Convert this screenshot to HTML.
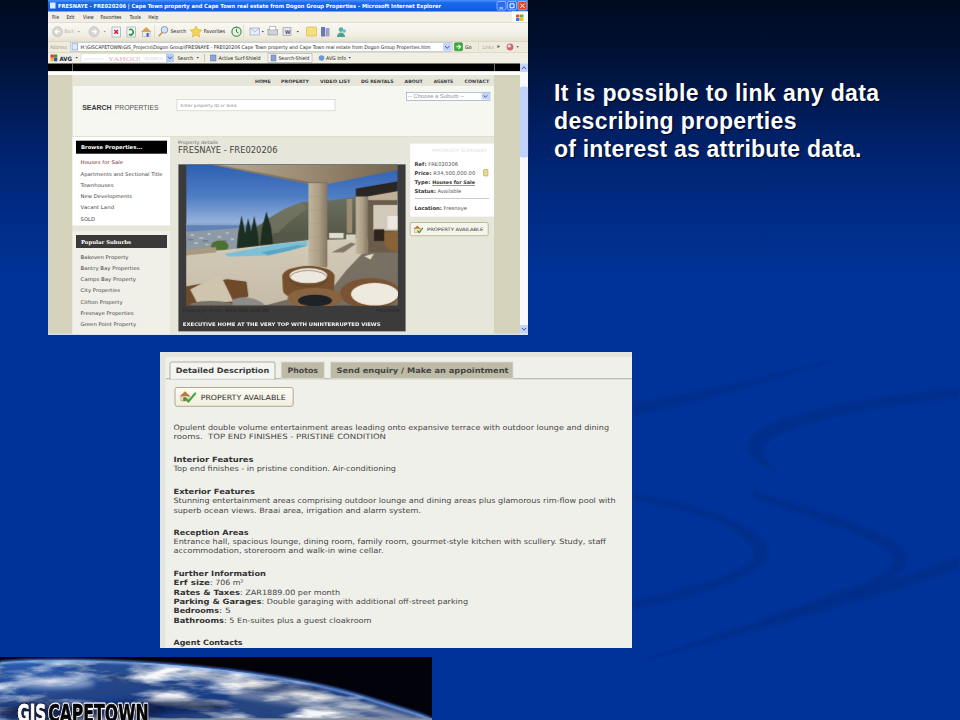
<!DOCTYPE html>
<html><head><meta charset="utf-8">
<title>GIS Cape Town</title>
<style>
*{box-sizing:border-box;margin:0;padding:0}
html,body{width:960px;height:720px;overflow:hidden}
body{position:relative;background:#003399;font-family:"Liberation Sans",sans-serif}
#bg{position:absolute;left:0;top:0;width:960px;height:720px;background:linear-gradient(to bottom,#000a1e 0px,#001238 60px,#001f63 130px,#002a82 200px,#003399 280px,#003399 720px)}
#title{position:absolute;left:554px;top:79.2px;color:#fff;font-weight:bold;font-size:23px;line-height:28.1px;text-shadow:1px 1px 1px rgba(0,0,20,.8);white-space:nowrap}
svg{position:absolute;left:0;top:0;font-family:"DejaVu Sans","Liberation Sans",sans-serif}
</style></head><body>
<div id="bg"></div>

<svg id="sw" width="960" height="720" viewBox="0 0 960 720">
<defs><filter id="swb" x="-5%" y="-5%" width="110%" height="110%"><feGaussianBlur stdDeviation="1.3"/></filter></defs>
<g fill="#00226e" fill-opacity=".26" filter="url(#swb)">
<path d="M632 403 C 700 392 775 376 838 358 C 775 381 700 402 632 416z"/>
<path d="M632 493 C 690 502 752 520 768 546 C 780 572 700 598 632 609 L632 601 C 690 588 765 570 752 548 C 738 524 690 510 632 500z"/>
<path d="M960 388 C 880 395 795 410 762 428 C 738 444 745 462 778 472 C 760 458 758 446 775 437 C 810 419 880 405 960 398z"/>
<path d="M752 490 C 800 505 885 528 905 550 C 918 574 875 588 838 600 C 770 621 700 642 636 664 C 700 640 770 616 830 594 C 868 582 900 572 892 556 C 876 536 800 515 752 498z"/>
<path d="M960 556 C 880 586 760 624 636 662 C 760 630 880 598 960 568z"/>
</g></svg>
<div id="title"><span style="letter-spacing:.4px">It is possible to link any data</span><br><span style="letter-spacing:.37px">describing properties</span><br><span style="letter-spacing:.2px">of interest as attribute data.</span></div>
<svg id="ie" width="960" height="720" viewBox="0 0 960 720">
<defs><linearGradient id="tbg" x1="0" y1="0" x2="0" y2="1"><stop offset="0" stop-color="#4a92fa"/><stop offset=".25" stop-color="#1a68ee"/><stop offset="1" stop-color="#0f5ae0"/></linearGradient></defs>
<rect x="48" y="0" width="480" height="335" fill="#ece9d8" />
<rect x="48" y="11.5" width="480" height="10.5" fill="#f1efe5" />
<linearGradient id="tlg" x1="0" y1="0" x2="0" y2="1"><stop offset="0" stop-color="#f9f8f3"/><stop offset=".7" stop-color="#f1efe4"/><stop offset="1" stop-color="#e6e2d2"/></linearGradient>
<rect x="48" y="22" width="480" height="19" fill="url(#tlg)" />
<rect x="48" y="41" width="480" height="11" fill="#eeebdd" />
<rect x="48" y="52" width="480" height="11.5" fill="#f1efe4" />
<rect x="48" y="0" width="480" height="11.5" fill="url(#tbg)" />
<rect x="50" y="2.5" width="5.5" height="6" fill="#dfe9fb" />
<text x="58" y="8" font-size="5.6" fill="#fff" textLength="383" lengthAdjust="spacingAndGlyphs" font-weight="bold">FRESNAYE - FRE020206 | Cape Town property and Cape Town real estate from Dogon Group Properties - Microsoft Internet Explorer</text>
<rect x="497" y="1.5" width="9" height="8.5" fill="#2a6cf0" rx="1.5" stroke="#cfe0ff" stroke-width=".6"/>
<rect x="507.5" y="1.5" width="9" height="8.5" fill="#2a6cf0" rx="1.5" stroke="#cfe0ff" stroke-width=".6"/>
<rect x="518" y="1.5" width="9" height="8.5" fill="#d8482a" rx="1.5" stroke="#f5d0c8" stroke-width=".6"/>
<path d="M499.5 8h3.5M510 3.8h4v4h-4zM520.3 3.6l4.4 4.4m0-4.4l-4.4 4.4" stroke="#fff" stroke-width="1" fill="none"/>
<text x="52" y="18.7" font-size="5.4" fill="#222" textLength="7" lengthAdjust="spacingAndGlyphs">File</text>
<text x="66.5" y="18.7" font-size="5.4" fill="#222" textLength="8" lengthAdjust="spacingAndGlyphs">Edit</text>
<text x="83" y="18.7" font-size="5.4" fill="#222" textLength="10.5" lengthAdjust="spacingAndGlyphs">View</text>
<text x="100.5" y="18.7" font-size="5.4" fill="#222" textLength="21" lengthAdjust="spacingAndGlyphs">Favorites</text>
<text x="129.5" y="18.7" font-size="5.4" fill="#222" textLength="11.5" lengthAdjust="spacingAndGlyphs">Tools</text>
<text x="148.3" y="18.7" font-size="5.4" fill="#222" textLength="10" lengthAdjust="spacingAndGlyphs">Help</text>
<rect x="512" y="11.5" width="16" height="10.5" fill="#fff" />
<path d="M516 14.5h3.5v3h-3.5z" fill="#e8502a"/><path d="M520 14.5h3.5v3h-3.5z" fill="#6bb52a"/><path d="M516 18h3.5v3h-3.5z" fill="#3a7be0"/><path d="M520 18h3.5v3h-3.5z" fill="#f0c020"/>
<rect x="48" y="22" width="480" height="0.6" fill="#d0ccb8" />
<circle cx="57.5" cy="31.7" r="5" fill="#d6d6d2" stroke="#b8b8b4" stroke-width=".6"/><path d="M59.8 31.7h-4.4m2-2.2l-2.2 2.2 2.2 2.2" stroke="#fff" stroke-width="1.2" fill="none"/>
<text x="64.5" y="33.4" font-size="5" fill="#b4b2a6" textLength="9.5" lengthAdjust="spacingAndGlyphs">Back</text>
<path d="M77.5 31l1.2 1.4 1.2-1.4z" fill="#999"/>
<circle cx="94" cy="31.7" r="5" fill="#d6d6d2" stroke="#b8b8b4" stroke-width=".6"/><path d="M91.8 31.7h4.4m-2-2.2l2.2 2.2-2.2 2.2" stroke="#fff" stroke-width="1.2" fill="none"/>
<path d="M103.5 31l1.2 1.4 1.2-1.4z" fill="#999"/>
<rect x="112" y="27" width="8.5" height="10" fill="#f4f4f8" stroke="#8a9ac0" stroke-width=".6"/>
<path d="M114.3 30l3.8 3.8m0-3.8l-3.8 3.8" stroke="#d02020" stroke-width="1.4"/>
<rect x="127" y="27" width="8.5" height="10" fill="#f4f8f4" stroke="#8a9ac0" stroke-width=".6"/>
<path d="M129 30a2.6 2.6 0 1 1 0 4" stroke="#2a9a3a" stroke-width="1.5" fill="none"/><path d="M129 34.5a2.6 2.6 0 0 0 4-1" stroke="#2a9a3a" stroke-width="1.5" fill="none"/>
<path d="M141 32l5.2-5 5.2 5z" fill="#d8a040"/><rect x="142.3" y="31.5" width="7.8" height="5.2" fill="#f0ece0" stroke="#9098b0" stroke-width=".5"/><rect x="146.5" y="33" width="2.2" height="3.7" fill="#3a68c8"/>
<rect x="154.5" y="25" width="0.5" height="13.5" fill="#cfcbb8" />
<circle cx="164.5" cy="29.8" r="3.3" fill="#cfe4fa" stroke="#7a92b8" stroke-width=".9"/><path d="M162.3 32.3l-3.6 4" stroke="#c09a50" stroke-width="1.6"/>
<text x="170.5" y="33.4" font-size="5.2" fill="#222" textLength="15.5" lengthAdjust="spacingAndGlyphs">Search</text>
<path d="M196 26l1.8 3.6 4 .5-2.9 2.8.7 4-3.6-1.9-3.6 1.9.7-4-2.9-2.8 4-.5z" fill="#f6d64a" stroke="#c8a020" stroke-width=".5"/>
<text x="203.7" y="33.4" font-size="5.2" fill="#222" textLength="21.5" lengthAdjust="spacingAndGlyphs">Favorites</text>
<circle cx="236.5" cy="31.7" r="4.6" fill="#e4f0e0" stroke="#3a8a4a" stroke-width="1.1"/><path d="M236.5 28.8v3l2 1.2" stroke="#2a6a3a" stroke-width=".9" fill="none"/>
<rect x="243.5" y="25" width="0.5" height="13.5" fill="#cfcbb8" />
<rect x="250" y="28" width="9.5" height="7" fill="#e8eef8" stroke="#8a9cc0" stroke-width=".6"/>
<path d="M250 28l4.75 3.8 4.75-3.8" stroke="#8a9cc0" stroke-width=".6" fill="none"/>
<path d="M261.5 31l1.2 1.4 1.2-1.4z" fill="#444"/>
<rect x="268" y="29.5" width="9.5" height="5.5" fill="#d0d2d8" stroke="#888c98" stroke-width=".6"/>
<rect x="269.8" y="26.5" width="6" height="3.5" fill="#fff" stroke="#888c98" stroke-width=".5"/>
<rect x="283" y="27.5" width="8" height="8" fill="#e4e4e8" stroke="#9094a0" stroke-width=".6"/>
<text x="285" y="33.6" font-size="5" fill="#555" font-weight="bold">W</text>
<path d="M296.5 31l1.2 1.4 1.2-1.4z" fill="#444"/>
<rect x="306.5" y="27" width="10" height="9" fill="#f4e07a" stroke="#d0b040" stroke-width=".6" rx="1"/>
<rect x="321" y="27" width="4" height="9.5" fill="#6a7ab8" />
<rect x="325.5" y="28" width="4" height="8.5" fill="#9aa4c8" />
<circle cx="341" cy="29.6" r="2.3" fill="#58b0a0"/><path d="M337 37c0-6 8-6 8 0z" fill="#48a090"/><circle cx="344.3" cy="31" r="1.8" fill="#70c0d0"/>
<rect x="48" y="41" width="480" height="0.6" fill="#d0ccb8" />
<text x="50" y="48.6" font-size="5" fill="#9a988a" textLength="17" lengthAdjust="spacingAndGlyphs">Address</text>
<rect x="70.3" y="42.3" width="381.7" height="9.2" fill="#fff" stroke="#a4b8d0" stroke-width=".6"/>
<rect x="72" y="43.8" width="5.8" height="6.2" fill="#dfe8f8" stroke="#5a7ac0" stroke-width=".5"/>
<text x="80.5" y="48.8" font-size="5" fill="#222" textLength="350" lengthAdjust="spacingAndGlyphs">H:\GISCAPETOWN\GIS_Projects\Dogon Group\FRESNAYE - FRE020206  Cape Town property and Cape Town real estate from Dogon Group Properties.htm</text>
<rect x="443" y="43" width="8.5" height="7.8" fill="#c4d4f8" rx="1"/>
<path d="M445 46l2.2 2.4 2.2-2.4" stroke="#3a5aa0" stroke-width="1" fill="none"/>
<rect x="454.5" y="42.8" width="8" height="8" fill="#3cae3c" rx="1" stroke="#2a7a2a" stroke-width=".5"/>
<path d="M456.3 46.8h4m-1.8-2l2 2-2 2" stroke="#fff" stroke-width="1.1" fill="none"/>
<text x="465" y="48.8" font-size="5.2" fill="#222" textLength="6.5" lengthAdjust="spacingAndGlyphs">Go</text>
<rect x="478.5" y="42.5" width="0.5" height="9" fill="#cfcbb8" />
<text x="482.5" y="48.8" font-size="5" fill="#a8a698" textLength="11.5" lengthAdjust="spacingAndGlyphs">Links</text>
<text x="496.5" y="48.3" font-size="5.5" fill="#222" font-weight="bold">»</text>
<circle cx="510" cy="47" r="3.4" fill="#c86a70"/><circle cx="509.2" cy="46" r="1.6" fill="#f0e0e0"/><path d="M516.5 46.3l1.2 1.4 1.2-1.4z" fill="#444"/>
<rect x="48" y="52" width="480" height="0.6" fill="#d0ccb8" />
<path d="M50.5 54.5h3.3v3.3h-3.3z" fill="#e03a2a"/><path d="M54 54.5h3.3v3.3h-3.3z" fill="#3a9a3a"/><path d="M50.5 58h3.3v3.3h-3.3z" fill="#f0b020"/><path d="M54 58h3.3v3.3h-3.3z" fill="#2a5ac0"/>
<text x="59.5" y="60.5" font-size="6" fill="#1a2a4a" textLength="12.5" lengthAdjust="spacingAndGlyphs" font-weight="bold">AVG</text>
<path d="M75.5 57l1.2 1.4 1.2-1.4z" fill="#333"/>
<rect x="81" y="53.6" width="86" height="8.6" fill="#fff" stroke="#c4c8d8" stroke-width=".5"/>
<text x="108" y="60.5" font-size="6.6" fill="#eab0be" textLength="33" lengthAdjust="spacingAndGlyphs" style="font-family:'Liberation Serif',serif">YAHOO!</text>
<text x="144" y="60" font-size="4.2" fill="#d4d4de" textLength="19" lengthAdjust="spacingAndGlyphs">SEARCH</text>
<text x="84" y="60" font-size="3.6" fill="#e4e4ec" textLength="20" lengthAdjust="spacingAndGlyphs">powered by</text>
<rect x="166" y="53.6" width="8" height="8.6" fill="#b8ccf4" rx="1"/>
<path d="M168 56.6l2 2.2 2-2.2" stroke="#3a5aa0" stroke-width="1" fill="none"/>
<text x="177.5" y="60.3" font-size="5.2" fill="#222" textLength="15.5" lengthAdjust="spacingAndGlyphs">Search</text>
<path d="M196.5 57l1.2 1.4 1.2-1.4z" fill="#333"/>
<rect x="204" y="54" width="0.5" height="8" fill="#9a988a" />
<rect x="210.5" y="55" width="5.5" height="6" fill="#8aa4d8" stroke="#5a70a8" stroke-width=".5"/>
<text x="218.5" y="60.3" font-size="5.2" fill="#222" textLength="42" lengthAdjust="spacingAndGlyphs">Active  Surf-Shield</text>
<rect x="268" y="53.5" width="44" height="9" fill="#f8f8f4" stroke="#a8a8a0" stroke-width=".6"/>
<rect x="271" y="55" width="5" height="6" fill="#8aa4d8" stroke="#5a70a8" stroke-width=".5"/>
<text x="278.5" y="60.3" font-size="5.2" fill="#222" textLength="31" lengthAdjust="spacingAndGlyphs">Search-Shield</text>
<circle cx="321.5" cy="58" r="2.8" fill="#6a9ad8"/>
<text x="326" y="60.3" font-size="5.2" fill="#222" textLength="20" lengthAdjust="spacingAndGlyphs">AVG Info</text>
<path d="M348.5 57l1.2 1.4 1.2-1.4z" fill="#333"/>
<rect x="48" y="63.5" width="472" height="7.8" fill="#000" />
<rect x="72.3" y="64" width="0.5" height="7" fill="#ddd" />
<rect x="494" y="64" width="0.5" height="7" fill="#ddd" />
<rect x="48" y="71.3" width="472" height="3.7" fill="#fff" />
<rect x="48" y="75" width="24.5" height="260" fill="#d6d3bd" />
<rect x="494" y="75" width="26" height="260" fill="#d6d3bd" />
<rect x="72.5" y="75" width="421.5" height="11.5" fill="#e6e5da" />
<rect x="72.8" y="86" width="421.2" height="50" fill="#f7f7f2" />
<rect x="72.5" y="136.5" width="421.5" height="198" fill="#e7e6da" />
<path d="M73 136.5H494" stroke="#c8c6b8" stroke-width=".5" stroke-dasharray="1 1"/>
<rect x="520" y="63.5" width="8" height="271.5" fill="#f8f9fe" />
<rect x="520" y="63.5" width="8" height="8.5" fill="#c4d4fa" rx="1"/>
<path d="M522 69l2-2.2 2 2.2" stroke="#3a5aa8" stroke-width="1" fill="none"/>
<rect x="520" y="325" width="8" height="8.5" fill="#c4d4fa" rx="1"/>
<path d="M522 328l2 2.2 2-2.2" stroke="#3a5aa8" stroke-width="1" fill="none"/>
<rect x="520.3" y="87" width="7.4" height="70" fill="#c2d3fa" rx="1.5" stroke="#a8bef0" stroke-width=".5"/>
<rect x="48" y="333.7" width="480" height="1.3" fill="#d8e0f8" />
<text x="255" y="83.3" font-size="4.6" fill="#3a3a3a" textLength="15.7" lengthAdjust="spacingAndGlyphs" font-weight="bold">HOME</text>
<text x="281" y="83.3" font-size="4.6" fill="#3a3a3a" textLength="28" lengthAdjust="spacingAndGlyphs" font-weight="bold">PROPERTY</text>
<text x="320" y="83.3" font-size="4.6" fill="#3a3a3a" textLength="30.4" lengthAdjust="spacingAndGlyphs" font-weight="bold">VIDEO LIST</text>
<text x="361" y="83.3" font-size="4.6" fill="#3a3a3a" textLength="32.6" lengthAdjust="spacingAndGlyphs" font-weight="bold">DG RENTALS</text>
<text x="404.6" y="83.3" font-size="4.6" fill="#3a3a3a" textLength="18.2" lengthAdjust="spacingAndGlyphs" font-weight="bold">ABOUT</text>
<text x="433.8" y="83.3" font-size="4.6" fill="#3a3a3a" textLength="19.4" lengthAdjust="spacingAndGlyphs" font-weight="bold">AGENTS</text>
<text x="464.5" y="83.3" font-size="4.6" fill="#3a3a3a" textLength="24.7" lengthAdjust="spacingAndGlyphs" font-weight="bold">CONTACT</text>
<text x="82.2" y="109.6" font-size="7.2" fill="#3c3c3c" textLength="29.4" lengthAdjust="spacingAndGlyphs" font-weight="bold" style="font-family:'Liberation Sans',sans-serif">SEARCH</text>
<text x="114.7" y="109.6" font-size="7.2" fill="#555" textLength="43.8" lengthAdjust="spacingAndGlyphs" style="font-family:'Liberation Sans',sans-serif">PROPERTIES</text>
<rect x="177" y="99.6" width="158" height="11.2" fill="#fff" stroke="#c8c8c0" stroke-width=".6"/>
<text x="180.5" y="106.7" font-size="4.3" fill="#8a8a8a" textLength="56" lengthAdjust="spacingAndGlyphs">Enter property ID or Area</text>
<rect x="406.3" y="92.3" width="83.6" height="8" fill="#fff" stroke="#7f9db9" stroke-width=".6"/>
<text x="408" y="98.3" font-size="5.2" fill="#94949c" textLength="56" lengthAdjust="spacingAndGlyphs" style="font-family:'Liberation Sans',sans-serif">-- Choose a Suburb --</text>
<rect x="481.5" y="93" width="7.8" height="6.6" fill="#c2d3fa" rx="1"/>
<path d="M483.5 95.3l1.9 2 1.9-2" stroke="#3a5aa8" stroke-width=".9" fill="none"/>
<text x="104" y="118.5" font-size="3.8" fill="#fbfbf8" textLength="22" lengthAdjust="spacingAndGlyphs">Quick Search</text>
<rect x="72.5" y="137" width="97.5" height="88.5" fill="#fff" />
<rect x="76" y="140.7" width="91" height="13" fill="#000" />
<text x="81" y="149.3" font-size="5.2" fill="#fff" textLength="61.5" lengthAdjust="spacingAndGlyphs" font-weight="bold">Browse Properties...</text>
<text x="80.6" y="164.10000000000002" font-size="5" fill="#7a1f33" textLength="42.5" lengthAdjust="spacingAndGlyphs">Houses for Sale</text>
<text x="80.6" y="175.5" font-size="5" fill="#444" textLength="82" lengthAdjust="spacingAndGlyphs">Apartments and Sectional Title</text>
<text x="80.6" y="186.8" font-size="5" fill="#444" textLength="33" lengthAdjust="spacingAndGlyphs">Townhouses</text>
<text x="80.6" y="198.0" font-size="5" fill="#444" textLength="51.5" lengthAdjust="spacingAndGlyphs">New Developments</text>
<text x="80.6" y="209.20000000000002" font-size="5" fill="#444" textLength="33.5" lengthAdjust="spacingAndGlyphs">Vacant Land</text>
<text x="80.6" y="220.5" font-size="5" fill="#444" textLength="14.5" lengthAdjust="spacingAndGlyphs">SOLD</text>
<rect x="72.5" y="231" width="97.5" height="103" fill="#f0efe8" />
<rect x="76" y="235" width="91" height="13" fill="#3b3a38" />
<text x="81" y="243.8" font-size="5.4" fill="#fff" textLength="50" lengthAdjust="spacingAndGlyphs" font-weight="bold" style="font-family:'DejaVu Serif',serif">Popular Suburbs</text>
<text x="80.6" y="258.6" font-size="5" fill="#444" textLength="48" lengthAdjust="spacingAndGlyphs">Bakoven Property</text>
<text x="80.6" y="269.8" font-size="5" fill="#444" textLength="59" lengthAdjust="spacingAndGlyphs">Bantry Bay Properties</text>
<text x="80.6" y="281.1" font-size="5" fill="#444" textLength="55.5" lengthAdjust="spacingAndGlyphs">Camps Bay Property</text>
<text x="80.6" y="292.3" font-size="5" fill="#444" textLength="39.5" lengthAdjust="spacingAndGlyphs">City Properties</text>
<text x="80.6" y="303.6" font-size="5" fill="#444" textLength="42" lengthAdjust="spacingAndGlyphs">Clifton Property</text>
<text x="80.6" y="314.8" font-size="5" fill="#444" textLength="53" lengthAdjust="spacingAndGlyphs">Fresnaye Properties</text>
<text x="80.6" y="326.0" font-size="5" fill="#444" textLength="55.5" lengthAdjust="spacingAndGlyphs">Green Point Property</text>
<text x="178" y="143.6" font-size="4.5" fill="#666" textLength="40" lengthAdjust="spacingAndGlyphs">Property details</text>
<text x="178" y="152.8" font-size="8.3" fill="#444" textLength="99.5" lengthAdjust="spacingAndGlyphs">FRESNAYE - FRE020206</text>
<rect x="410.2" y="143.6" width="83.6" height="73" fill="#fff" />
<text x="432" y="151.6" font-size="4.6" fill="#e0e0e0" textLength="55" lengthAdjust="spacingAndGlyphs">PROPERTY SUMMARY</text>
<text x="414.5" y="166.3" font-size="5.25" fill="#555"><tspan font-weight="bold" fill="#333">Ref:</tspan> FRE020206</text>
<text x="414.5" y="175.3" font-size="5.25" fill="#555"><tspan font-weight="bold" fill="#333">Price:</tspan> R34,500,000.00</text>
<text x="414.5" y="193.20000000000002" font-size="5.25" fill="#555"><tspan font-weight="bold" fill="#333">Status:</tspan> Available</text>
<text x="414.5" y="209.5" font-size="5.25" fill="#555"><tspan font-weight="bold" fill="#333">Location:</tspan> Fresnaye</text>
<text x="414.5" y="184.2" font-size="5.25" fill="#333" font-weight="bold">Type: <tspan text-decoration="underline" font-size="4.85">Houses for Sale</tspan></text>
<rect x="414.5" y="198.5" width="75" height="0.5" fill="#999" />
<rect x="483.5" y="169.5" width="4.5" height="6.5" fill="#e8d890" stroke="#a09060" stroke-width=".5" rx=".7"/>
<rect x="410.2" y="222.5" width="78" height="13.2" fill="#f6f5ea" stroke="#b2ad8c" stroke-width=".8" rx="1.5"/>
<path d="M413.5 229l3.8-3.4 3.8 3.4z" fill="#c87830"/><rect x="414.5" y="228.7" width="5.6" height="3.8" fill="#f0e8d0" stroke="#a08050" stroke-width=".4"/><path d="M417.5 230.5l1.8 2 3.6-4.6" stroke="#3a9a3a" stroke-width="1.2" fill="none"/>
<text x="427" y="231" font-size="4.6" fill="#333" textLength="56.3" lengthAdjust="spacingAndGlyphs">PROPERTY AVAILABLE</text>
</svg><svg id="photo" style="left:176px;top:160px" width="232" height="175" viewBox="0 0 955 720" preserveAspectRatio="none">
<defs>
<linearGradient id="sky" x1="0" y1="0" x2="0" y2="1"><stop offset="0" stop-color="#2e60b2"/><stop offset=".45" stop-color="#4f7dc4"/><stop offset=".8" stop-color="#93b0db"/><stop offset="1" stop-color="#b4c6e0"/></linearGradient>
<linearGradient id="ceil" x1="0" y1="0" x2="1" y2="0"><stop offset="0" stop-color="#b9ab92"/><stop offset=".5" stop-color="#9c8c74"/><stop offset="1" stop-color="#76664f"/></linearGradient>
<linearGradient id="pil" x1="0" y1="0" x2="1" y2="0"><stop offset="0" stop-color="#c2b69e"/><stop offset=".55" stop-color="#ad9f86"/><stop offset="1" stop-color="#847661"/></linearGradient>
<linearGradient id="mtn" x1="0" y1="0" x2="0" y2="1"><stop offset="0" stop-color="#6b7060"/><stop offset="1" stop-color="#4a4c3c"/></linearGradient>
<linearGradient id="flr" x1="0" y1="0" x2="0" y2="1"><stop offset="0" stop-color="#d3cbb9"/><stop offset="1" stop-color="#c6bca8"/></linearGradient>
<filter id="b1" x="-2%" y="-2%" width="104%" height="104%"><feGaussianBlur stdDeviation="1.6"/></filter><filter id="b2"><feGaussianBlur stdDeviation="2"/></filter>
<filter id="b5"><feGaussianBlur stdDeviation="5"/></filter>
<clipPath id="pc"><rect x="42" y="20" width="870" height="577"/></clipPath>
</defs>
<rect x="10" y="18" width="935" height="687" fill="#3b3b3b"/>
<g clip-path="url(#pc)"><g filter="url(#b1)">
<rect x="42" y="20" width="870" height="290" fill="url(#sky)"/>
<rect x="42" y="262" width="300" height="40" fill="#5f83b4"/>
<rect x="42" y="258" width="300" height="10" fill="#8fa9cf" filter="url(#b2)"/>
<path d="M42 295 L260 280 L330 300 L330 370 L42 370z" fill="#8e99a6"/>
<g fill="#c8ccd0" opacity=".7"><rect x="60" y="305" width="14" height="8"/><rect x="95" y="318" width="18" height="7"/><rect x="130" y="300" width="12" height="9"/><rect x="170" y="312" width="16" height="8"/><rect x="205" y="296" width="12" height="8"/><rect x="75" y="338" width="16" height="8"/><rect x="120" y="345" width="14" height="7"/><rect x="225" y="322" width="14" height="8"/></g>
<g fill="#5a6470" opacity=".6"><rect x="50" y="325" width="20" height="6"/><rect x="110" y="330" width="22" height="6"/><rect x="150" y="340" width="20" height="6"/><rect x="190" y="330" width="18" height="6"/></g>
<path d="M300 300 L380 240 L450 200 L520 172 L560 172 L640 165 L720 155 L760 150 L912 150 L912 400 L300 400z" fill="url(#mtn)"/>
<path d="M380 240 L450 200 L520 172 L540 200 L470 250 L420 300 L360 330z" fill="#7a7c68" opacity=".6"/>
<g fill="#1c2e20"><path d="M270 228 L256 300 L250 365 L292 365 L284 300z"/><path d="M297 238 L284 305 L280 365 L316 365 L310 300z"/><path d="M322 230 L308 300 L304 362 L342 362 L336 300z"/><path d="M372 212 L354 280 L346 355 L400 355 L392 280z"/></g>
<ellipse cx="180" cy="355" rx="36" ry="24" fill="#4c7030"/>
<rect x="400" y="300" width="150" height="40" fill="#55584a"/>
<path d="M42 380 L200 370 L540 330 L912 320 L912 597 L42 597z" fill="url(#flr)"/>
<path d="M42 368 L165 358 L165 380 L42 392z" fill="#a89a80"/>
<path d="M200 386 L420 345 L540 332 L540 352 L470 372 L380 392 L215 398z" fill="#7cc0d6"/>
<path d="M350 380 L500 350 L540 352 L470 372 L380 392z" fill="#5aa6c6"/>
<path d="M769 382 L700 455 L646 524 L372 597 L912 597 L912 335 L812 372z" fill="#6b6358" opacity=".88"/>
<path d="M640 380 L720 340 L740 345 L690 380z" fill="#6f6252" opacity=".8"/>
<path d="M775 395 L815 385 L800 410z" fill="#e8dcc4"/>
<path d="M740 118 L912 88 L912 150 L740 152z" fill="#2a2522"/>
<path d="M790 150 L912 128 L912 190 L790 165z" fill="#bfb199"/>
<rect x="790" y="165" width="122" height="215" fill="#6a5c4c"/>
<rect x="812" y="185" width="100" height="105" fill="#d2cbbc"/>
<rect x="870" y="230" width="42" height="55" fill="#ece8e0"/>
<rect x="815" y="285" width="42" height="48" fill="#2e241c"/>
<path d="M856 300 L912 292 L912 378 L880 372 L858 350z" fill="#8a6238"/>
<rect x="703" y="160" width="22" height="140" fill="#9e8e70"/>
<rect x="740" y="150" width="50" height="236" fill="url(#pil)"/>
<rect x="630" y="300" width="60" height="22" fill="#e0dcd0"/><rect x="700" y="306" width="40" height="24" fill="#d8d2c4"/>
<path d="M150 20 L912 20 L912 42 L625 98 L545 98z" fill="url(#ceil)"/>
<path d="M150 20 L545 98 L625 98 L625 92 L548 90 L180 20z" fill="#6a5a48" opacity=".55"/>
<rect x="545" y="95" width="78" height="346" fill="url(#pil)"/>
<g stroke="#9a8a70" stroke-width="2" opacity=".5"><path d="M545 150h78M545 205h78M545 262h78M545 318h78M545 372h78"/></g>
<path d="M437 478 A108 42 0 0 1 653 478 L650 535 A105 40 0 0 1 440 535z" fill="#75502f"/>
<ellipse cx="545" cy="476" rx="78" ry="31" fill="#eee9de"/>
<ellipse cx="545" cy="487" rx="78" ry="33" fill="none" stroke="#4a3220" stroke-width="4" opacity=".5"/>
<ellipse cx="800" cy="548" rx="125" ry="62" fill="#7a5232"/>
<ellipse cx="818" cy="552" rx="98" ry="46" fill="#efeae0"/>
<ellipse cx="572" cy="568" rx="113" ry="42" fill="#8a6440"/>
<ellipse cx="572" cy="578" rx="70" ry="24" fill="#1c2226"/>
<path d="M42 520 L210 490 L290 500 L298 560 L240 597 L42 597z" fill="#6e4a2c"/>
<path d="M58 532 L182 470 L236 582 L90 594z" fill="#cfc4ae"/>
<path d="M232 575 Q290 548 360 590 L360 597 L232 597z" fill="#8e8c88"/>
<path d="M60 590 Q140 570 232 590 L232 597 L60 597z" fill="#77726c"/>
</g></g>
<text x="28" y="627" font-size="19" fill="#262626" textLength="355" lengthAdjust="spacingAndGlyphs">Fresnaye Price: R34,500,000.00</text>
<text x="920" y="627" font-size="17" fill="#262626" text-anchor="end">FRE020206</text>
<text x="28" y="681" font-size="20" fill="#f4f4f4" font-weight="bold" textLength="814" lengthAdjust="spacingAndGlyphs">EXECUTIVE HOME AT THE VERY TOP WITH UNINTERRUPTED VIEWS</text>
</svg><svg id="dp" width="960" height="720" viewBox="0 0 960 720">
<rect x="160" y="352" width="472" height="296" fill="#e5e5db" />
<rect x="166" y="357.5" width="466" height="290.5" fill="#f0f0eb" />
<rect x="166" y="357.2" width="466" height="0.6" fill="#f8f8f4" />
<rect x="165.7" y="357.5" width="0.6" height="290.5" fill="#f8f8f4" />
<rect x="166" y="378.4" width="466" height="0.8" fill="#9c9c94" />
<path d="M170 379.2V364a2 2 0 0 1 2-2h101a2 2 0 0 1 2 2v15.2z" fill="#f4f4f0" stroke="#9c9c94" stroke-width=".8"/>
<rect x="170.4" y="378.3" width="104.2" height="1.2" fill="#f2f2ee" />
<text x="175.7" y="373.3" font-size="7.4" fill="#3a3a3a" textLength="93.5" lengthAdjust="spacingAndGlyphs" font-weight="bold">Detailed Description</text>
<rect x="281.2" y="362" width="43" height="16.6" fill="#bdbaa5" stroke="#dcdcd2" stroke-width=".8"/>
<text x="287.5" y="373.3" font-size="7.4" fill="#444" textLength="30.5" lengthAdjust="spacingAndGlyphs" font-weight="bold">Photos</text>
<rect x="330.5" y="362" width="182.5" height="16.6" fill="#bdbaa5" stroke="#dcdcd2" stroke-width=".8"/>
<text x="336.5" y="373.3" font-size="7.4" fill="#444" textLength="172" lengthAdjust="spacingAndGlyphs" font-weight="bold">Send enquiry / Make an appointment</text>
<defs><linearGradient id="btn" x1="0" y1="0" x2="0" y2="1"><stop offset="0" stop-color="#fdfcf4"/><stop offset="1" stop-color="#f1eedd"/></linearGradient></defs>
<rect x="175" y="387.5" width="118.2" height="18.8" fill="url(#btn)" stroke="#a59f84" stroke-width=".9" rx="2.2"/>
<path d="M179.5 396.5l5.5-5.2 5.5 5.2z" fill="#c07a38"/><rect x="181" y="396" width="8" height="5" fill="#efe6cc" stroke="#9a7a4a" stroke-width=".5"/><rect x="183.2" y="397.3" width="2.4" height="3.7" fill="#8a6a3a"/><path d="M185.5 398.2l3 3.2 6.8-8" stroke="#3da23d" stroke-width="2" fill="none" stroke-linecap="round"/>
<text x="200.7" y="399.8" font-size="7.2" fill="#2e2e2e" textLength="85" lengthAdjust="spacingAndGlyphs">PROPERTY AVAILABLE</text>
<text x="173.5" y="429.9" font-size="7.33" fill="#454545" textLength="435.5" lengthAdjust="spacingAndGlyphs">Opulent double volume entertainment areas leading onto expansive terrace with outdoor lounge and dining</text>
<text x="173.5" y="439.2" font-size="7.33" fill="#454545" textLength="212.5" lengthAdjust="spacingAndGlyphs">rooms.  TOP END FINISHES - PRISTINE CONDITION</text>
<text x="173.5" y="461.7" font-size="7.33" fill="#333" textLength="80.0" lengthAdjust="spacingAndGlyphs" font-weight="bold">Interior Features</text>
<text x="173.5" y="470.7" font-size="7.33" fill="#454545" textLength="222.5" lengthAdjust="spacingAndGlyphs">Top end finishes - in pristine condition. Air-conditioning</text>
<text x="173.5" y="493.9" font-size="7.33" fill="#333" textLength="81.5" lengthAdjust="spacingAndGlyphs" font-weight="bold">Exterior Features</text>
<text x="173.5" y="503.2" font-size="7.33" fill="#454545" textLength="442.0" lengthAdjust="spacingAndGlyphs">Stunning entertainment areas comprising outdoor lounge and dining areas plus glamorous rim-flow pool with</text>
<text x="173.5" y="512.5" font-size="7.33" fill="#454545" textLength="247.5" lengthAdjust="spacingAndGlyphs">superb ocean views. Braai area, irrigation and alarm system.</text>
<text x="173.5" y="534.9" font-size="7.33" fill="#333" textLength="75.0" lengthAdjust="spacingAndGlyphs" font-weight="bold">Reception Areas</text>
<text x="173.5" y="544.1" font-size="7.33" fill="#454545" textLength="432.5" lengthAdjust="spacingAndGlyphs">Entrance hall, spacious lounge, dining room, family room, gourmet-style kitchen with scullery. Study, staff</text>
<text x="173.5" y="553.4" font-size="7.33" fill="#454545" textLength="210.0" lengthAdjust="spacingAndGlyphs">accommodation, storeroom and walk-in wine cellar.</text>
<text x="173.5" y="575.9" font-size="7.33" fill="#333" textLength="92.5" lengthAdjust="spacingAndGlyphs" font-weight="bold">Further Information</text>
<text x="173.5" y="585.2" font-size="7.33" fill="#333" textLength="36.5" lengthAdjust="spacingAndGlyphs" font-weight="bold">Erf size</text>
<text x="210" y="585.2" font-size="7.33" fill="#454545" textLength="33.5" lengthAdjust="spacingAndGlyphs">: 706 m²</text>
<text x="173.5" y="594.5" font-size="7.33" fill="#333" textLength="66.5" lengthAdjust="spacingAndGlyphs" font-weight="bold">Rates &amp; Taxes</text>
<text x="240" y="594.5" font-size="7.33" fill="#454545" textLength="100" lengthAdjust="spacingAndGlyphs">: ZAR1889.00 per month</text>
<text x="173.5" y="603.9" font-size="7.33" fill="#333" textLength="88.0" lengthAdjust="spacingAndGlyphs" font-weight="bold">Parking &amp; Garages</text>
<text x="261.5" y="603.9" font-size="7.33" fill="#454545" textLength="206.5" lengthAdjust="spacingAndGlyphs">: Double garaging with additional off-street parking</text>
<text x="173.5" y="613.2" font-size="7.33" fill="#333" textLength="45.5" lengthAdjust="spacingAndGlyphs" font-weight="bold">Bedrooms</text>
<text x="219" y="613.2" font-size="7.33" fill="#454545" textLength="12" lengthAdjust="spacingAndGlyphs">: 5</text>
<text x="173.5" y="622.5" font-size="7.33" fill="#333" textLength="50.5" lengthAdjust="spacingAndGlyphs" font-weight="bold">Bathrooms</text>
<text x="224" y="622.5" font-size="7.33" fill="#454545" textLength="147.5" lengthAdjust="spacingAndGlyphs">: 5 En-suites plus a guest cloakroom</text>
<text x="173.5" y="644.9" font-size="7.33" fill="#333" textLength="69.0" lengthAdjust="spacingAndGlyphs" font-weight="bold">Agent Contacts</text>
</svg>
<svg id="earth" style="left:0;top:657px" width="432" height="63" viewBox="0 657 432 63">
<defs>
<linearGradient id="eg" x1="0" y1="0" x2="1" y2="1"><stop offset="0" stop-color="#2f60b0"/><stop offset=".45" stop-color="#18408e"/><stop offset="1" stop-color="#0e2c6c"/></linearGradient>
<filter id="eb1"><feGaussianBlur stdDeviation="1.2"/></filter>
<filter id="eb3"><feGaussianBlur stdDeviation="2.5"/></filter>
<filter id="cl" x="0" y="0" width="100%" height="100%" filterUnits="objectBoundingBox"><feTurbulence type="fractalNoise" baseFrequency="0.014 0.06" numOctaves="5" seed="7" result="n"/><feColorMatrix type="matrix" values="0 0 0 0 .93  0 0 0 0 .94  0 0 0 0 .95  3.4 0 0 0 -1.45"/></filter>
<filter id="dk" x="0" y="0" width="100%" height="100%" filterUnits="objectBoundingBox"><feTurbulence type="fractalNoise" baseFrequency="0.01 0.05" numOctaves="3" seed="21"/><feColorMatrix type="matrix" values="0 0 0 0 .02  0 0 0 0 .06  0 0 0 0 .22  0 3 0 0 -1.1"/></filter>
<clipPath id="ec"><path d="M0 662.5 C 40 659 110 659.5 183 666 S 320 683 367 698 S 418 713 432 719.5 L432 720 L0 720z"/></clipPath>
</defs>
<rect x="0" y="657" width="432" height="63" fill="#02020a" />
<path d="M0 662.5 C 40 659 110 659.5 183 666 S 320 683 367 698 S 418 713 432 719.5" fill="none" stroke="#4a7ad8" stroke-width="3" filter="url(#eb1)"/>
<g clip-path="url(#ec)">
<rect x="0" y="657" width="432" height="63" fill="url(#eg)" />
<rect x="0" y="657" width="432" height="63" fill="#000" filter="url(#dk)"/>
<rect x="0" y="657" width="432" height="63" fill="#fff" filter="url(#cl)"/>
<g filter="url(#eb3)"><path d="M190 674 C 260 684 330 698 420 722" fill="none" stroke="#e6e2d8" stroke-width="7" opacity=".55"/><path d="M230 694 C 290 700 340 710 380 722" fill="none" stroke="#e6e2d8" stroke-width="6" opacity=".45"/><ellipse cx="170" cy="706" rx="60" ry="6" fill="#06143c" opacity=".7"/><ellipse cx="80" cy="712" rx="85" ry="9" fill="#0a1a48" opacity=".75"/><ellipse cx="290" cy="689" rx="50" ry="3" fill="#0a1c4c" opacity=".5"/><ellipse cx="55" cy="683" rx="40" ry="6" fill="#eef0f4" opacity=".5"/></g>
<path d="M0 662.5 C 40 659 110 659.5 183 666 S 320 683 367 698 S 418 713 432 719.5" fill="none" stroke="#8eb8f8" stroke-width="3.5" filter="url(#eb1)" opacity=".75"/>
</g>
<rect x="150" y="718.3" width="282" height="1.7" fill="#8a8f98" />
<g font-weight="bold" font-size="25" stroke-linejoin="round">
<text x="17.2" y="721.6" textLength="29" lengthAdjust="spacingAndGlyphs" fill="#0a0a14" stroke="#0a0a14" stroke-width="2.6">GIS</text>
<text x="17.2" y="721.6" textLength="29" lengthAdjust="spacingAndGlyphs" fill="#fff" stroke="#fff" stroke-width=".9">GIS</text>
<text x="48.2" y="721.6" textLength="100.4" lengthAdjust="spacingAndGlyphs" fill="#fff" stroke="#fff" stroke-width="3.2">CAPETOWN</text>
<text x="48.2" y="721.6" textLength="100.4" lengthAdjust="spacingAndGlyphs" fill="#050508" stroke="#050508" stroke-width=".7">CAPETOWN</text>
</g>
</svg>
</body></html>
